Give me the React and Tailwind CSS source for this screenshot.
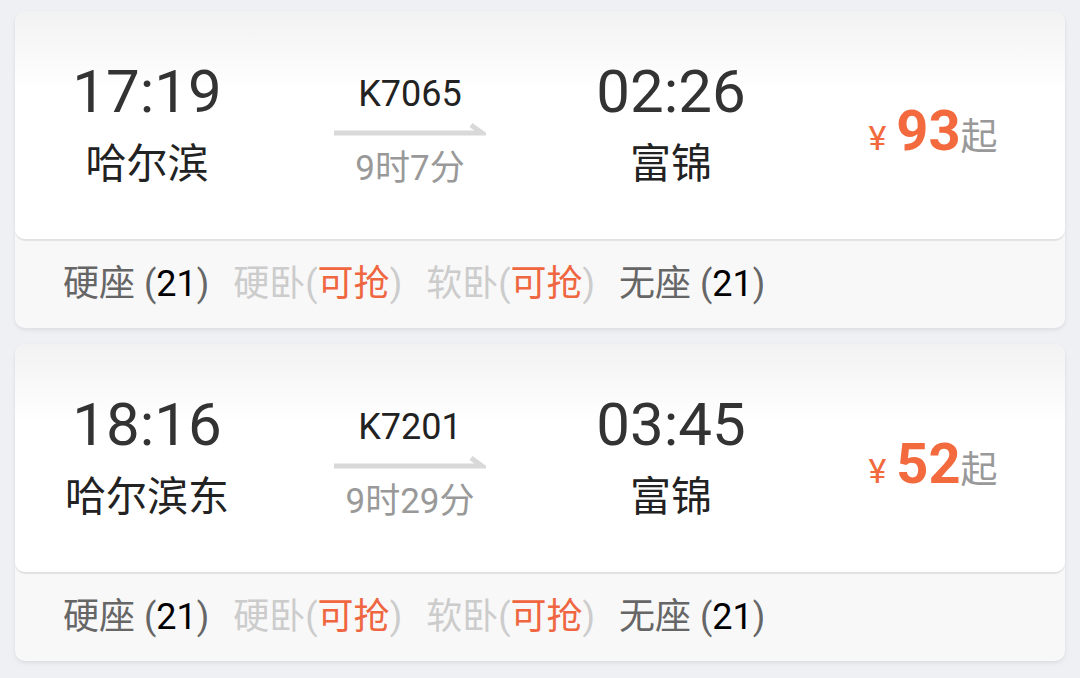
import React from 'react';

const trains = [
  { dep: '17:19', from: '哈尔滨', no: 'K7065', dur: '9时7分', arr: '02:26', to: '富锦', price: 93 },
  { dep: '18:16', from: '哈尔滨东', no: 'K7201', dur: '9时29分', arr: '03:45', to: '富锦', price: 52 },
];

const Arrow = () => (
  <svg width="152" height="14" viewBox="0 0 152 14" className="block">
    <polyline points="0,10 148,10 137,2" fill="none" stroke="#d9d9d9" strokeWidth="5" />
  </svg>
);

const Seats = () => (
  <div className="flex items-center h-full pl-[48px] gap-[24px] text-[36px] leading-none">
    <span className="text-[#666]">
      硬座 (<span className="text-black">21</span>)
    </span>
    <span className="text-[#cccccc]">
      硬卧(<span className="text-[#ef6640]">可抢</span>)
    </span>
    <span className="text-[#cccccc]">
      软卧(<span className="text-[#ef6640]">可抢</span>)
    </span>
    <span className="text-[#666]">
      无座 (<span className="text-black">21</span>)
    </span>
  </div>
);

const TrainCard = ({ train }) => (
  <div className="rounded-[10px] bg-[#f8f8f8] shadow-[0_2px_4px_rgba(0,0,0,0.08)]">
    <div className="h-[228px] rounded-[10px] bg-[linear-gradient(to_bottom,#f2f2f2,#ffffff_35%)] shadow-[0_2px_1px_rgba(0,0,0,0.09)] flex">
      {/* departure */}
      <div className="w-[264px] flex flex-col items-center pt-[49px]">
        <div className="text-[60px] leading-[64px] text-[#333]">{train.dep}</div>
        <div className="text-[41px] leading-[48px] mt-[16px] text-[#222]">{train.from}</div>
      </div>
      {/* train no + duration */}
      <div className="w-[262px] flex flex-col items-center pt-[63px]">
        <div className="text-[36px] leading-[40px] text-[#222]">{train.no}</div>
        <div className="mt-[9px]">
          <Arrow />
        </div>
        <div className="text-[35px] leading-[40px] mt-[12px] text-[#999]">{train.dur}</div>
      </div>
      {/* arrival */}
      <div className="w-[260px] flex flex-col items-center pt-[49px]">
        <div className="text-[60px] leading-[64px] text-[#333]">{train.arr}</div>
        <div className="text-[41px] leading-[48px] mt-[16px] text-[#222]">{train.to}</div>
      </div>
      {/* price */}
      <div className="flex-1 flex items-center justify-center pt-[12px]">
        <div className="flex items-baseline">
          <span className="text-[34px] text-[#f26a3e] mr-[10px] leading-none">¥</span>
          <span className="text-[56px] font-bold text-[#f26a3e] leading-none">{train.price}</span>
          <span className="text-[37px] text-[#999] leading-none">起</span>
        </div>
      </div>
    </div>
    <div className="h-[89px]">
      <Seats />
    </div>
  </div>
);

export default function App() {
  return (
    <div
      className="min-h-screen bg-[#eff0f3] px-[15px] pt-[11px] flex flex-col gap-[16px]"
      style={{ fontFamily: "Roboto, 'Noto Sans CJK SC', sans-serif" }}
    >
      {trains.map((t) => (
        <TrainCard key={t.no} train={t} />
      ))}
    </div>
  );
}
